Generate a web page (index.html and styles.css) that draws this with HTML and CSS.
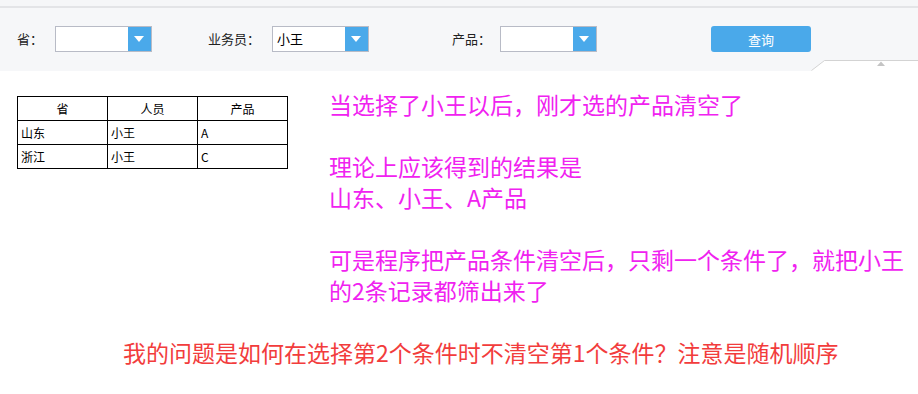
FILE: index.html
```html
<!DOCTYPE html>
<html lang="zh-CN">
<head>
<meta charset="utf-8">
<title>查询</title>
<link rel="stylesheet" href="styles.css">
</head>
<body>
<div class="top-strip"></div>
<div class="toolbar">
  <span class="label label-prov">省：</span>
  <div class="combo combo-prov"><span class="combo-text"></span><span class="combo-btn"></span></div>
  <span class="label label-sales">业务员：</span>
  <div class="combo combo-sales"><span class="combo-text">小王</span><span class="combo-btn"></span></div>
  <span class="label label-prod">产品：</span>
  <div class="combo combo-prod"><span class="combo-text"></span><span class="combo-btn"></span></div>
  <button class="query-btn">查询</button>
  <svg class="collapse-tab" width="107" height="11" viewBox="0 0 107 11">
    <path d="M0.5 10.5 L13.5 0.5 L107 0.5 L107 11 L0 11 Z" fill="#ffffff"/>
    <path d="M0.5 10.5 L13.5 0.5 L107 0.5" fill="none" stroke="#d3d3d3"/>
    <path d="M66 6 L74 6 L70 1.5 Z" fill="#c4c4c4"/>
  </svg>
</div>
<div class="content">
  <div class="row">
    <table class="report">
      <tr class="head"><td>省</td><td>人员</td><td>产品</td></tr>
      <tr><td>山东</td><td>小王</td><td>A</td></tr>
      <tr><td>浙江</td><td>小王</td><td>C</td></tr>
    </table>
    <div class="notes">
      <p>当选择了小王以后，刚才选的产品清空了</p>
      <p>理论上应该得到的结果是<br>山东、小王、A产品</p>
      <p>可是程序把产品条件清空后，只剩一个条件了，就把小王<br>的2条记录都筛出来了</p>
    </div>
  </div>
  <p class="question">我的问题是如何在选择第2个条件时不清空第1个条件？注意是随机顺序</p>
</div>
</body>
</html>
```

FILE: styles.css
```css
html, body {
  margin: 0;
  padding: 0;
  background: #ffffff;
  font-family: "Microsoft YaHei", "Noto Sans CJK SC", "Noto Sans", sans-serif;
}

.top-strip {
  height: 6px;
  background: #f5f6f8;
  border-bottom: 2px solid #e3e4e7;
}

.toolbar {
  position: relative;
  height: 63px;
  background: #f6f7f9;
  display: flex;
  align-items: flex-start;
  padding-top: 18px;
  box-sizing: border-box;
}

.label {
  font-size: 13px;
  line-height: 26px;
  color: #222;
}

.label-prov { margin-left: 17px; width: 38px; }
.label-sales { margin-left: 56px; width: 64px; }
.label-prod { margin-left: 83px; width: 48px; }

.combo {
  display: flex;
  width: 97px;
  height: 26px;
  box-sizing: border-box;
  border: 1px solid #b8bbc6;
  background: #fff;
}

.combo-text {
  flex: 1;
  font-size: 13px;
  line-height: 24px;
  padding-left: 4px;
  color: #000;
}

.combo-btn {
  position: relative;
  width: 23px;
  background: #4aa9ea;
}

.combo-btn::after {
  content: "";
  position: absolute;
  left: 6px;
  top: 9px;
  border-left: 5.5px solid transparent;
  border-right: 5.5px solid transparent;
  border-top: 6px solid #ffffff;
}

.query-btn {
  margin-left: 114px;
  width: 100px;
  height: 26px;
  border: none;
  border-radius: 3px;
  background: #4aa9ea;
  color: #fff;
  font-family: inherit;
  font-size: 13px;
  padding: 0;
}

.collapse-tab {
  position: absolute;
  right: 0;
  bottom: 0;
  display: block;
}

.content {
  padding-top: 18px;
}

.row {
  display: flex;
  align-items: flex-start;
}

.report {
  margin-left: 17px;
  margin-top: 7px;
  border-collapse: collapse;
  font-family: "SimSun", "Noto Sans CJK SC", sans-serif;
  font-size: 12px;
  color: #000;
}

.report td {
  border: 1px solid #000;
  width: 90px;
  height: 24px;
  padding: 0 0 0 3px;
  box-sizing: border-box;
  line-height: 14px;
}

.report .head td {
  text-align: center;
  padding: 0;
}

.notes {
  margin-left: 41px;
  color: #f022f0;
  font-size: 23px;
  line-height: 31px;
}

.notes p {
  margin: 0 0 31px 0;
}

.notes p:last-child {
  margin-bottom: 0;
}

.question {
  margin: 31px 0 0 123px;
  color: #f23c3c;
  font-size: 23px;
  line-height: 31px;
  white-space: nowrap;
}
```
